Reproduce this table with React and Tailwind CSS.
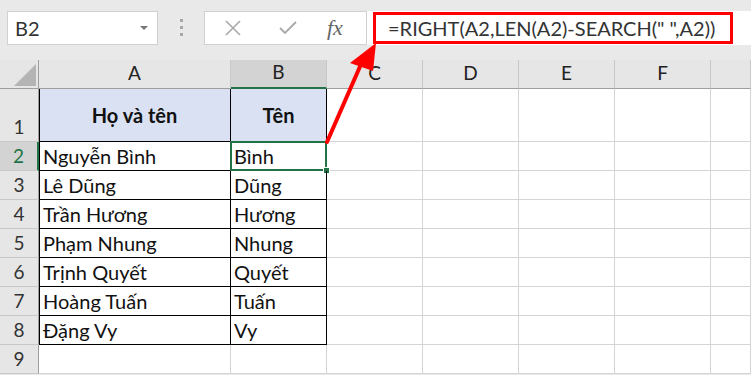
import React from "react";

const cols = ["A", "B", "C", "D", "E", "F", ""];
const colWidths = "39px 192px 96px 96px 96px 96px 96px 40px";
const rows = [
  ["Nguyễn Bình", "Bình"],
  ["Lê Dũng", "Dũng"],
  ["Trần Hương", "Hương"],
  ["Phạm Nhung", "Nhung"],
  ["Trịnh Quyết", "Quyết"],
  ["Hoàng Tuấn", "Tuấn"],
  ["Đặng Vy", "Vy"],
];

const cellFont = { fontFamily: "Lato, 'Noto Sans', sans-serif" };

function FormulaBar() {
  return (
    <div className="flex h-[60px] items-start bg-[#e9e9e9] pt-[11px]" style={{ fontFamily: "'Open Sans', 'Noto Sans', sans-serif" }}>
      {/* name box */}
      <div className="ml-[7px] flex h-[34px] w-[151px] items-center justify-between border border-[#d0d0d0] bg-white pl-[7px] pr-[9px]">
        <span className="text-[20px] text-[#333]" style={cellFont}>B2</span>
        <svg width="8" height="5" viewBox="0 0 8 5"><path d="M0 0h8L4 4z" fill="#777" /></svg>
      </div>
      {/* grip dots */}
      <div className="flex w-[46px] flex-col items-center gap-[4px] pt-[8px]">
        <span className="h-[3px] w-[3px] bg-[#a8a8a8]" />
        <span className="h-[3px] w-[3px] bg-[#a8a8a8]" />
        <span className="h-[3px] w-[3px] bg-[#a8a8a8]" />
      </div>
      {/* cancel / enter / fx */}
      <div className="flex h-[34px] w-[163px] items-center border border-[#d0d0d0] bg-white">
        <svg className="ml-[19px]" width="18" height="18" viewBox="0 0 18 18">
          <path d="M2 2l14 14M16 2L2 16" stroke="#a9a9a9" strokeWidth="1.6" />
        </svg>
        <svg className="ml-[37px]" width="18" height="16" viewBox="0 0 18 16">
          <path d="M1 8l5 5L17 2" stroke="#a9a9a9" strokeWidth="1.8" fill="none" />
        </svg>
        <span className="ml-[30px] text-[22px] italic leading-none text-[#666]" style={{ fontFamily: "'Liberation Serif', serif" }}>
          fx
        </span>
      </div>
      {/* formula input */}
      <div className="flex h-[34px] flex-1 items-center bg-white pl-[6px]">
        <div className="flex h-[32px] w-[360px] items-center border-[3px] border-[#ff0000] pl-[12px]">
          <span className="whitespace-pre text-[20px] text-[#333]" style={cellFont}>
            =RIGHT(A2,LEN(A2)-SEARCH(" ",A2))
          </span>
        </div>
      </div>
    </div>
  );
}

function Sheet() {
  return (
    <div
      className="grid bg-white text-[20px] text-[#111]"
      style={{ ...cellFont, gridTemplateColumns: colWidths, gridTemplateRows: "29px 53px repeat(8, 29px)" }}
    >
      {/* select-all corner */}
      <div className="relative border-b border-r border-[#9e9e9e] bg-[#e6e6e6]">
        <svg className="absolute left-[14px] top-[4px]" width="22" height="22" viewBox="0 0 22 22">
          <path d="M22 0V22H0z" fill="#b4b4b4" />
        </svg>
      </div>
      {cols.map((c, i) => (
        <div
          key={"h" + i}
          className={
            c === "B"
              ? "flex items-end justify-center border-b-2 border-r border-b-[#217346] border-r-[#c8c8c8] bg-[#d3d3d3] pb-[1px] text-[19px] text-[#222]"
              : "flex items-end justify-center border-b border-r border-b-[#9e9e9e] border-r-[#c8c8c8] bg-[#e6e6e6] pb-[1px] text-[19px] text-[#222]"
          }
        >
          {c}
        </div>
      ))}

      {/* row 1: table header */}
      <div className="flex items-end justify-center border-b border-r border-b-[#c8c8c8] border-r-[#9e9e9e] bg-[#e6e6e6] text-[19px] text-[#333]">
        1
      </div>
      <div className="flex items-center justify-center border-b border-r border-black bg-[#d9e1f2] font-bold shadow-[inset_1px_0_0_#000]">
        Họ và tên
      </div>
      <div className="flex items-center justify-center border-b border-r border-black bg-[#d9e1f2] font-bold">Tên</div>
      {[0, 1, 2, 3, 4].map((k) => (
        <div key={"r1" + k} className="border-b border-r border-[#d4d4d4]" />
      ))}

      {rows.map((r, ri) => {
        const n = ri + 2;
        const sel = n === 2;
        return (
          <React.Fragment key={n}>
            <div
              className={
                sel
                  ? "flex items-center justify-center border-b border-r-2 border-b-[#c8c8c8] border-r-[#217346] bg-[#d3d3d3] text-[19px] text-[#217346]"
                  : "flex items-center justify-center border-b border-r border-b-[#c8c8c8] border-r-[#9e9e9e] bg-[#e6e6e6] text-[19px] text-[#333]"
              }
            >
              {n}
            </div>
            <div className="flex items-center border-b border-r border-black pl-[4px] shadow-[inset_1px_0_0_#000]">{r[0]}</div>
            <div className="relative flex items-center border-b border-r border-black pl-[3px]">
              {r[1]}
              {sel && (
                <>
                  <div className="pointer-events-none absolute -left-px -top-px bottom-[-1px] right-[-1px] border-2 border-[#217346]" />
                  <div className="absolute bottom-[-4px] right-[-4px] h-[7px] w-[7px] border border-white bg-[#217346]" />
                </>
              )}
            </div>
            {[0, 1, 2, 3, 4].map((k) => (
              <div key={k} className="border-b border-r border-[#d4d4d4]" />
            ))}
          </React.Fragment>
        );
      })}

      {/* row 9 */}
      <div className="flex items-center justify-center border-b border-r border-b-[#c8c8c8] border-r-[#9e9e9e] bg-[#e6e6e6] text-[19px] text-[#333]">
        9
      </div>
      {[0, 1, 2, 3, 4, 5, 6].map((k) => (
        <div key={"r9" + k} className="border-b border-r border-[#d4d4d4]" />
      ))}
    </div>
  );
}

export default function App() {
  return (
    <div className="relative h-[375px] w-[751px] overflow-hidden bg-[#e9e9e9]">
      <FormulaBar />
      <Sheet />
      {/* callout arrow from B1 to the formula */}
      <svg className="pointer-events-none absolute left-0 top-0" width="751" height="375" viewBox="0 0 751 375">
        <path d="M327 142L362 62" stroke="#ff0000" strokeWidth="4" strokeLinecap="round" />
        <path d="M376 43L350 63L373 71z" fill="#ff0000" />
      </svg>
    </div>
  );
}
